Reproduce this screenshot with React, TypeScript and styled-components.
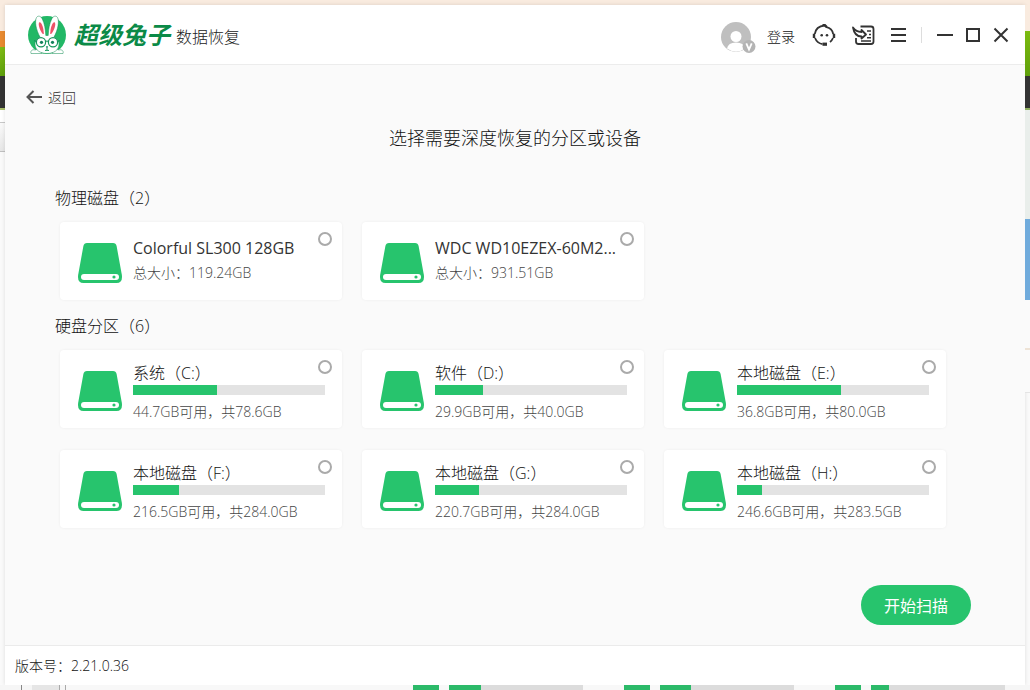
import React, { useState } from "react";
import styled, { createGlobalStyle } from "styled-components";

const GlobalStyle = createGlobalStyle`
  * { box-sizing: border-box; }
  body {
    margin: 0;
    background: #fafafa;
    color: #111;
    font-family: "Open Sans", "Noto Sans CJK SC", sans-serif;
    font-size: 14px;
    font-weight: 300;
  }
  button { font: inherit; color: inherit; border: 0; padding: 0; background: none; cursor: pointer; }
`;

const Desktop = styled.div`
  display: grid;
  grid-template-columns: 5px minmax(0, 1fr) 5px;
  grid-template-rows: 5px minmax(0, 1fr) 5px;
  min-height: 100vh;
`;

const TopEdge = styled.div`
  grid-column: 1 / -1;
  background: #f9ebdf;
`;

const SideEdge = styled.div`
  display: flex;
  flex-direction: column;
`;

const EdgeBlock = styled.div<{ $h: number; $bg: string }>`
  height: ${(p) => p.$h}px;
  background: ${(p) => p.$bg};
`;

const BottomEdge = styled.div`
  grid-column: 1 / -1;
  display: flex;
  background: #f6f6f6;
`;

const EdgeSegment = styled.div<{ $w: number; $bg: string }>`
  width: ${(p) => p.$w}px;
  background: ${(p) => p.$bg};
`;

const Window = styled.div`
  display: flex;
  flex-direction: column;
  background: #fafafa;
  box-shadow: 0 0 4px rgba(0, 0, 0, 0.12);
`;

const Header = styled.header`
  display: flex;
  align-items: center;
  justify-content: space-between;
  height: 60px;
  padding: 0 16px 0 22px;
  background: #fff;
  border-bottom: 1px solid #ececec;
`;

const Brand = styled.div`
  display: flex;
  align-items: center;
`;

const BrandName = styled.span`
  margin-left: 7px;
  color: #0b8a47;
  font-size: 24px;
  font-weight: 700;
  font-style: italic;
  line-height: 32px;
`;

const ProductName = styled.span`
  margin: 4px 0 0 6px;
  color: #222;
  font-size: 16px;
  line-height: 24px;
`;

const HeaderActions = styled.div`
  display: flex;
  align-items: center;
`;

const Account = styled.button`
  display: flex;
  align-items: center;
  gap: 10px;
  margin-right: 17px;
  padding-top: 4px;
  line-height: 20px;
`;

const AppTools = styled.div`
  display: flex;
  align-items: center;
  gap: 15px;
  padding-right: 13px;
`;

const WindowControls = styled.div`
  display: flex;
  align-items: center;
  gap: 12px;
  padding-left: 15px;
  border-left: 1px solid #ddd;
`;

const IconButton = styled.button`
  display: flex;
`;

const Main = styled.main`
  flex: 1;
  display: flex;
  flex-direction: column;
  padding: 22px 50px 20px;
`;

const BackButton = styled.button`
  display: flex;
  align-items: center;
  align-self: flex-start;
  gap: 5px;
  margin-left: -30px;
  color: #333;
  line-height: 22px;
`;

const Title = styled.h1`
  margin: 16px 0 0;
  font-size: 18px;
  font-weight: inherit;
  line-height: 26px;
  text-align: center;
`;

const Section = styled.section`
  margin-top: 14px;

  h1 + & { margin-top: 35px; }
`;

const SectionTitle = styled.h2`
  margin: 0;
  font-size: 16px;
  font-weight: inherit;
  line-height: 24px;
`;

const CardGrid = styled.div`
  display: grid;
  grid-template-columns: repeat(3, minmax(0, 1fr));
  gap: 22px 20px;
  padding: 12px 29px 0 5px;
`;

const Card = styled.label`
  position: relative;
  display: flex;
  align-items: flex-start;
  gap: 11px;
  height: 78px;
  padding: 0 17px 0 18px;
  background: #fff;
  border-radius: 4px;
  box-shadow: 0 0 3px rgba(0, 0, 0, 0.06);
  cursor: pointer;

  > svg { margin-top: 20px; }
`;

const CardName = styled.span`
  font-size: 16px;
  line-height: 22px;
`;

const CardBody = styled.div<{ $compact: boolean }>`
  flex: 1;
  min-width: 0;
  display: flex;
  flex-direction: column;
  gap: ${(p) => (p.$compact ? 3 : 1)}px;
  padding-top: ${(p) => (p.$compact ? 15 : 12)}px;
  white-space: nowrap;

  ${CardName} {
    color: ${(p) => (p.$compact ? "#333" : "inherit")};
    font-weight: ${(p) => (p.$compact ? 400 : 300)};
  }
`;

const CardDetail = styled.span`
  color: #444;
  line-height: 22px;
`;

const UsageTrack = styled.div`
  height: 10px;
  margin-bottom: 5px;
  background: #e3e3e3;
`;

const UsageFill = styled.div`
  height: 100%;
  background: #27c46d;
`;

const Radio = styled.input`
  position: absolute;
  top: 10px;
  right: 10px;
  width: 14px;
  height: 14px;
  margin: 0;
  appearance: none;
  border: 2px solid #aaa;
  border-radius: 50%;
  background: #fff;

  &:checked { border: 4px solid #27c46d; }
`;

const ScanButton = styled.button`
  align-self: flex-end;
  width: 110px;
  height: 40px;
  margin: auto 4px 0 0;
  padding-top: 2px;
  border-radius: 20px;
  background: #27c46d;
  color: #fff;
  font-size: 16px;
  font-weight: 400;
  line-height: 24px;
`;

const Footer = styled.footer`
  display: flex;
  align-items: center;
  height: 40px;
  padding: 0 10px 2px;
  background: #fff;
  border-top: 1px solid #ebebeb;
`;

type Block = [number, string];

const leftEdge: Block[] = [
  [26, "#f9ebdf"],
  [16, "#e88a30"],
  [29, "linear-gradient(#7fbc14, #5e9f0c)"],
  [32, "#333"],
  [2, "#a9bf6a"],
  [12, "#fff"],
  [1, "#c8c8c8"],
  [28, "linear-gradient(#fafafa, #e6e6e6)"],
  [1, "#c0c0c0"],
];

const rightEdge: Block[] = [
  [26, "#f9ebdf"],
  [45, "linear-gradient(#7cbb10, #5f9f0a)"],
  [32, "#333"],
  [2, "#8fb060"],
  [109, "#e9eeeb"],
  [81, "#70abdc"],
  [48, "#fafafa"],
  [2, "#eee3d6"],
  [42, "#fafafa"],
  [1, "#e4e4e4"],
];

const bottomEdge: Block[] = [
  [21, "#f6f6f6"],
  [1, "#888"],
  [10, "#f6f6f6"],
  [27, "#e6e6e6"],
  [1, "#aaa"],
  [5, "#f6f6f6"],
  [1, "#aaa"],
  [347, "#f8f8f8"],
  [26, "#2cba69"],
  [10, "#f8f8f8"],
  [32, "#2cba69"],
  [102, "#dcdcdc"],
  [41, "#f8f8f8"],
  [26, "#2cba69"],
  [10, "#f8f8f8"],
  [31, "#2cba69"],
  [103, "#dcdcdc"],
  [41, "#f8f8f8"],
  [26, "#2cba69"],
  [10, "#f8f8f8"],
  [18, "#2cba69"],
  [116, "#dcdcdc"],
];

interface Drive {
  id: string;
  name: string;
  detail: string;
  used?: number;
}

const disks: Drive[] = [
  { id: "disk0", name: "Colorful SL300 128GB", detail: "总大小：119.24GB" },
  { id: "disk1", name: "WDC WD10EZEX-60M2...", detail: "总大小：931.51GB" },
];

const partitions: Drive[] = [
  { id: "c", name: "系统（C:）", detail: "44.7GB可用，共78.6GB", used: 44 },
  { id: "d", name: "软件（D:）", detail: "29.9GB可用，共40.0GB", used: 25 },
  { id: "e", name: "本地磁盘（E:）", detail: "36.8GB可用，共80.0GB", used: 54 },
  { id: "f", name: "本地磁盘（F:）", detail: "216.5GB可用，共284.0GB", used: 24 },
  { id: "g", name: "本地磁盘（G:）", detail: "220.7GB可用，共284.0GB", used: 23 },
  { id: "h", name: "本地磁盘（H:）", detail: "246.6GB可用，共283.5GB", used: 13 },
];

const RabbitLogo = () => (
  <svg width="40" height="40" viewBox="0 0 40 40" aria-hidden="true">
    <circle cx="20" cy="20" r="19" fill="#22b866" />
    <g fill="#fff" stroke="#0f8a50" strokeWidth="0.500">
      <path d="M4 38.500C3 36 5.500 34 8 35C11 33.500 14.500 35.500 15 38.500Z" />
      <path d="M25 38.500C25.500 35.500 29 33.500 32 35C34.500 34 37 36 36 38.500Z" />
      <path d="M13 22C9 15 7.500 6 9.500 2.500C11 0.300 13.800 0.800 15.300 4C17.500 8.500 18.500 14 18.800 20.500L21.200 20.500C21.500 14 22.500 8.500 24.700 4C26.200 0.800 29 0.300 30.500 2.500C32.500 6 31 15 27 22C30.500 23.500 32 26 32 29C32 35 27 38.500 20 38.500S8 35 8 29C8 26 9.500 23.500 13 22Z" />
    </g>
    <path d="M15.800 19C12.500 15 10.800 9 12.300 7.200C14.500 6.500 16.800 13 16.800 19Z" fill="#ed5268" />
    <path d="M24.200 19C27.500 15 29.200 9 27.700 7.200C25.500 6.500 23.200 13 23.200 19Z" fill="#ed5268" />
    <g fill="none" stroke="#15965c" strokeWidth="1.200">
      <circle cx="14" cy="27.300" r="4.600" />
      <circle cx="26" cy="27.300" r="4.600" />
      <path d="M18.500 26.500Q20 25.500 21.500 26.500M9.300 26.500L7 25.500M30.700 26.500L33 25.500" />
      <path d="M20 32V35M18 35.200Q19 36.200 20 35Q21 36.200 22 35.200" strokeWidth="1" />
    </g>
    <path d="M18.800 31.300H21.200L20 33Z" fill="#12805a" />
    <circle cx="14.500" cy="27.300" r="1.600" fill="#12805a" />
    <circle cx="25.500" cy="27.300" r="1.600" fill="#12805a" />
  </svg>
);

const Avatar = () => (
  <svg width="36" height="34" viewBox="0 -1 36 34" aria-hidden="true">
    <circle cx="15" cy="16" r="15" fill="#bfbfbf" />
    <circle cx="15" cy="15.500" r="5.500" fill="#fff" />
    <path d="M6 27.500Q7 21.500 15 21.500T24 27.500Q15 34 6 27.500Z" fill="#fff" />
    <circle cx="28" cy="25.500" r="6.500" fill="#b4b4b4" />
    <path d="M25.300 22.300L28 28.500L30.700 22.300" fill="none" stroke="#fff" strokeWidth="1.800" />
  </svg>
);

const SupportIcon = () => (
  <svg width="24" height="24" viewBox="0 0 24 24" fill="none" stroke="#333" strokeWidth="1.800" aria-hidden="true">
    <path d="M2.800 11C3.500 6 7.500 3 12.500 2.500L14.500 4.200C18 5 20.500 7.500 21.200 11" strokeLinejoin="round" />
    <path d="M10.500 1.800H13L15 3.800" />
    <path d="M2 10.800V15M22 10.800V15" strokeWidth="2.400" />
    <path d="M3 15Q5 20 10.500 21.200M21 15Q20 17.500 18 19" />
    <path d="M10.500 21.200H15" strokeWidth="3.200" />
    <circle cx="9.700" cy="12.200" r="1.300" fill="#333" stroke="none" />
    <circle cx="15" cy="12.200" r="1.300" fill="#333" stroke="none" />
  </svg>
);

const FeedbackIcon = () => (
  <svg width="24" height="24" viewBox="0 0 24 24" fill="none" stroke="#333" strokeWidth="1.800" aria-hidden="true">
    <path d="M9.500 3.500H20Q22.500 3.500 22.500 6V18.500Q22.500 21 20 21H7.500Q5 21 5 18.500V15" />
    <path d="M2 4.500Q5 9 10.500 9V7L15 11.500L10.500 15.500V13.500Q3.500 13.500 2 4.500Z" strokeLinejoin="round" />
    <path d="M16 8H20M18 11.500H20M16 14.800H20M10 18H20" strokeWidth="1.400" />
  </svg>
);

const DriveIcon = () => (
  <svg width="44" height="42" viewBox="0 0 44 42" aria-hidden="true">
    <path d="M9 1H35Q38 1 38.600 4L43.500 31Q44 33 44 35Q44 41 38.500 41H5.500Q0 41 0 35Q0 33 0.500 31L5.400 4Q6 1 9 1Z" fill="#27c46d" />
    <rect x="3" y="32" width="38" height="6" rx="3" fill="#fff" />
    <circle cx="36" cy="35" r="1.600" fill="#27c46d" />
  </svg>
);

function DriveCard({ drive, checked, onSelect }: { drive: Drive; checked: boolean; onSelect: (id: string) => void }) {
  return (
    <Card>
      <DriveIcon />
      <CardBody $compact={drive.used === undefined}>
        <CardName>{drive.name}</CardName>
        {drive.used !== undefined && (
          <UsageTrack>
            <UsageFill style={{ width: `${drive.used}%` }} />
          </UsageTrack>
        )}
        <CardDetail>{drive.detail}</CardDetail>
      </CardBody>
      <Radio type="radio" name="drive" checked={checked} onChange={() => onSelect(drive.id)} />
    </Card>
  );
}

export default function App() {
  const [selected, setSelected] = useState("");

  const renderDrives = (drives: Drive[]) => (
    <CardGrid>
      {drives.map((d) => (
        <DriveCard key={d.id} drive={d} checked={selected === d.id} onSelect={setSelected} />
      ))}
    </CardGrid>
  );

  return (
    <>
      <GlobalStyle />
      <Desktop>
        <TopEdge />
        <SideEdge>
          {leftEdge.map(([h, bg], i) => <EdgeBlock key={i} $h={h} $bg={bg} />)}
        </SideEdge>
        <Window>
          <Header>
            <Brand>
              <RabbitLogo />
              <BrandName>超级兔子</BrandName>
              <ProductName>数据恢复</ProductName>
            </Brand>
            <HeaderActions>
              <Account><Avatar />登录</Account>
              <AppTools>
                <IconButton aria-label="客服"><SupportIcon /></IconButton>
                <IconButton aria-label="反馈"><FeedbackIcon /></IconButton>
                <IconButton aria-label="菜单">
                  <svg width="18" height="18" viewBox="0 0 18 18" stroke="#333" strokeWidth="2"><path d="M1 3H16M1 9H16M1 15H16" /></svg>
                </IconButton>
              </AppTools>
              <WindowControls>
                <IconButton aria-label="最小化">
                  <svg width="16" height="16" viewBox="0 0 16 16" stroke="#333" strokeWidth="2"><path d="M0 8H16" /></svg>
                </IconButton>
                <IconButton aria-label="最大化">
                  <svg width="16" height="16" viewBox="0 0 16 16" fill="none" stroke="#333" strokeWidth="2"><rect x="2" y="2" width="12" height="12" /></svg>
                </IconButton>
                <IconButton aria-label="关闭">
                  <svg width="16" height="16" viewBox="0 0 16 16" stroke="#333" strokeWidth="2"><path d="M1.500 1.500L14.500 14.500M14.500 1.500L1.500 14.500" /></svg>
                </IconButton>
              </WindowControls>
            </HeaderActions>
          </Header>
          <Main>
            <BackButton>
              <svg width="18" height="16" viewBox="0 0 18 16" fill="none" stroke="#555" strokeWidth="2"><path d="M17 7H2.500M8.500 1L2.500 7L8.500 13" /></svg>
              返回
            </BackButton>
            <Title>选择需要深度恢复的分区或设备</Title>
            <Section>
              <SectionTitle>物理磁盘（2）</SectionTitle>
              {renderDrives(disks)}
            </Section>
            <Section>
              <SectionTitle>硬盘分区（6）</SectionTitle>
              {renderDrives(partitions)}
            </Section>
            <ScanButton>开始扫描</ScanButton>
          </Main>
          <Footer>版本号：2.21.0.36</Footer>
        </Window>
        <SideEdge>
          {rightEdge.map(([h, bg], i) => <EdgeBlock key={i} $h={h} $bg={bg} />)}
        </SideEdge>
        <BottomEdge>
          {bottomEdge.map(([w, bg], i) => <EdgeSegment key={i} $w={w} $bg={bg} />)}
        </BottomEdge>
      </Desktop>
    </>
  );
}
